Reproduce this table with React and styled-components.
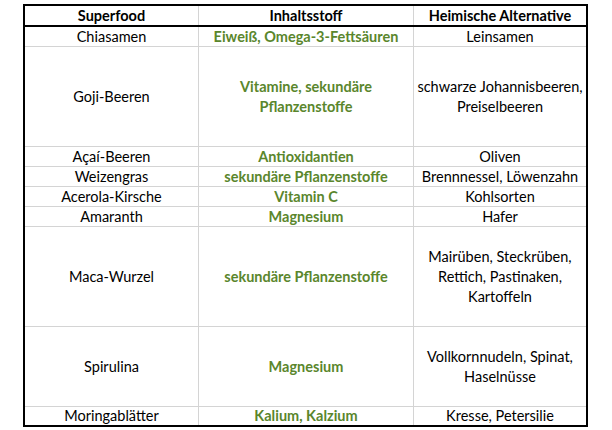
import React from "react";
import styled, { createGlobalStyle } from "styled-components";

const GlobalStyle = createGlobalStyle`
  html, body {
    margin: 0;
    padding: 0;
    background: #fff;
  }
  body {
    font-family: Lato, "Liberation Sans", sans-serif;
  }
`;

const Page = styled.div`
  padding: 4px 0 0 23px;
`;

const Sheet = styled.div`
  width: 561px;
  border: 2px solid #000;
  background: #d4d4d4;
`;

const Grid = styled.div`
  display: grid;
  grid-template-columns: 173px 214px 172px;
  column-gap: 1px;
  row-gap: 1px;
  grid-template-rows: ${(p) => p.$rows};
`;

const HeaderGrid = styled(Grid)`
  border-bottom: 2px solid #000;
`;

const Cell = styled.div`
  display: flex;
  align-items: center;
  justify-content: center;
  flex-direction: column;
  background: #fff;
  text-align: center;
  font-size: 14.5px;
  line-height: 20px;
  color: ${(p) => (p.$green ? "#5a862c" : "#000")};
  font-weight: ${(p) => (p.$bold ? 700 : 400)};
  white-space: nowrap;
`;

const rows = [
  { h: 19, a: ["Chiasamen"], b: ["Eiweiß, Omega-3-Fettsäuren"], c: ["Leinsamen"] },
  {
    h: 99,
    a: ["Goji-Beeren"],
    b: ["Vitamine, sekundäre", "Pflanzenstoffe"],
    c: ["schwarze Johannisbeeren,", "Preiselbeeren"],
  },
  { h: 19, a: ["Açaí-Beeren"], b: ["Antioxidantien"], c: ["Oliven"] },
  { h: 19, a: ["Weizengras"], b: ["sekundäre Pflanzenstoffe"], c: ["Brennnessel, Löwenzahn"] },
  { h: 19, a: ["Acerola-Kirsche"], b: ["Vitamin C"], c: ["Kohlsorten"] },
  { h: 19, a: ["Amaranth"], b: ["Magnesium"], c: ["Hafer"] },
  {
    h: 99,
    a: ["Maca-Wurzel"],
    b: ["sekundäre Pflanzenstoffe"],
    c: ["Mairüben, Steckrüben,", "Rettich, Pastinaken,", "Kartoffeln"],
  },
  {
    h: 79,
    a: ["Spirulina"],
    b: ["Magnesium"],
    c: ["Vollkornnudeln, Spinat,", "Haselnüsse"],
  },
  { h: 18, a: ["Moringablätter"], b: ["Kalium, Kalzium"], c: ["Kresse, Petersilie"] },
];

const Lines = ({ lines }) => lines.map((l) => <span key={l}>{l}</span>);

export default function App() {
  return (
    <>
      <GlobalStyle />
      <Page>
        <Sheet>
          <HeaderGrid $rows="19px">
            <Cell $bold>Superfood</Cell>
            <Cell $bold>Inhaltsstoff</Cell>
            <Cell $bold>Heimische Alternative</Cell>
          </HeaderGrid>
          <Grid $rows={rows.map((r) => `${r.h}px`).join(" ")}>
            {rows.map((r) => (
              <React.Fragment key={r.a[0]}>
                <Cell>
                  <Lines lines={r.a} />
                </Cell>
                <Cell $bold $green>
                  <Lines lines={r.b} />
                </Cell>
                <Cell>
                  <Lines lines={r.c} />
                </Cell>
              </React.Fragment>
            ))}
          </Grid>
        </Sheet>
      </Page>
    </>
  );
}
